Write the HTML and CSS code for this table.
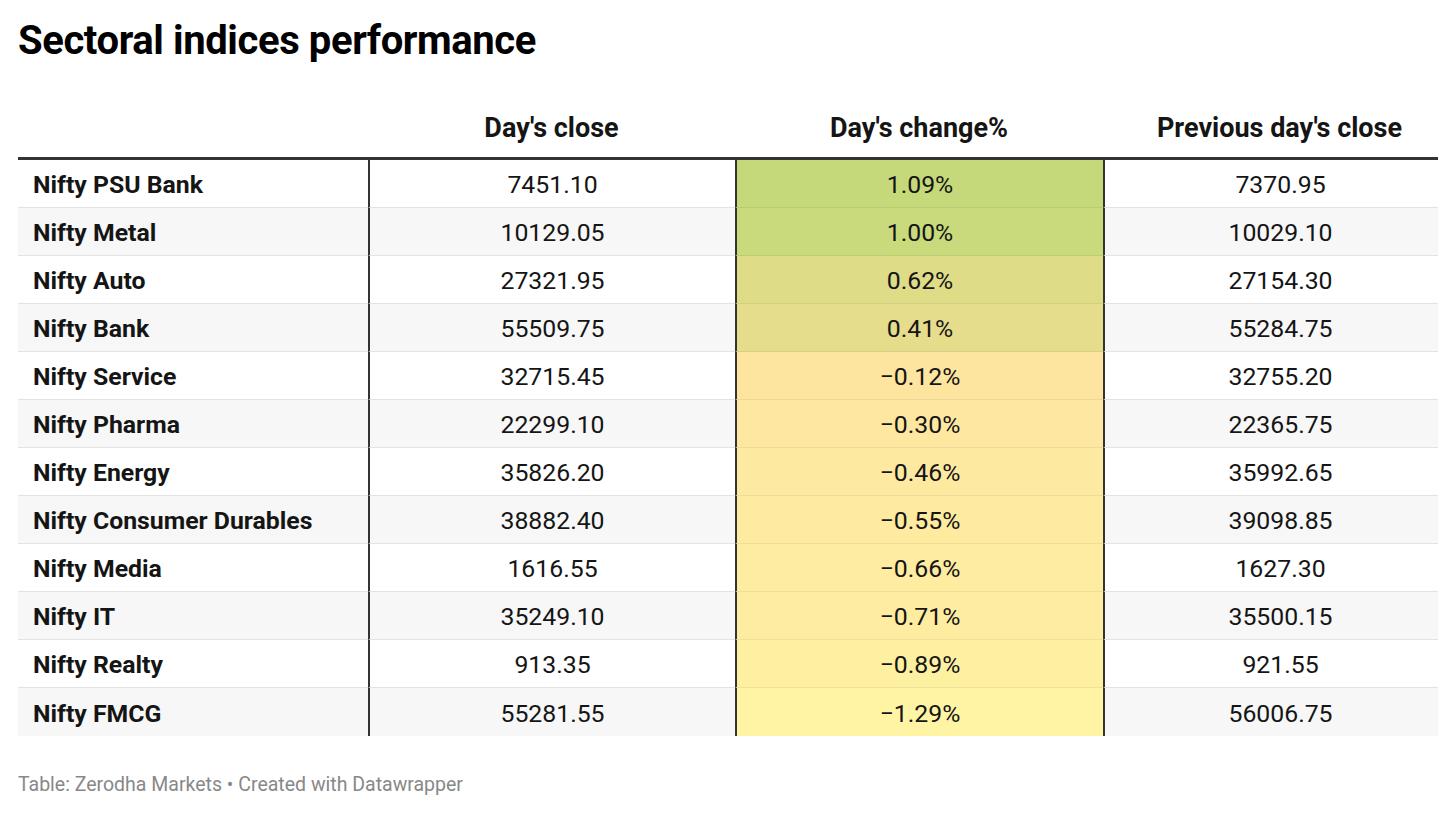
FILE: index.html
```html
<!DOCTYPE html>
<html>
<head>
<meta charset="utf-8">
<link rel="stylesheet" href="styles.css">
</head>
<body>
<div class="chart">
  <h1 class="title">Sectoral indices performance</h1>
  <table class="tbl">
    <colgroup>
      <col class="c-name"><col class="c-close"><col class="c-chg"><col class="c-prev">
    </colgroup>
    <thead>
      <tr>
        <th class="h-name"></th>
        <th>Day's close</th>
        <th>Day's change%</th>
        <th class="prev">Previous day's close</th>
      </tr>
    </thead>
    <tbody>
      <tr><td class="name">Nifty PSU Bank</td><td class="num sep">7451.10</td><td class="num sep chg" style="background:#c5d97a">1.09%</td><td class="num sep prev">7370.95</td></tr>
      <tr class="alt"><td class="name">Nifty Metal</td><td class="num sep">10129.05</td><td class="num sep chg" style="background:#c8da7b">1.00%</td><td class="num sep prev">10029.10</td></tr>
      <tr><td class="name">Nifty Auto</td><td class="num sep">27321.95</td><td class="num sep chg" style="background:#dfdc88">0.62%</td><td class="num sep prev">27154.30</td></tr>
      <tr class="alt"><td class="name">Nifty Bank</td><td class="num sep">55509.75</td><td class="num sep chg" style="background:#e5dc8c">0.41%</td><td class="num sep prev">55284.75</td></tr>
      <tr><td class="name">Nifty Service</td><td class="num sep">32715.45</td><td class="num sep chg" style="background:#fde49f">−0.12%</td><td class="num sep prev">32755.20</td></tr>
      <tr class="alt"><td class="name">Nifty Pharma</td><td class="num sep">22299.10</td><td class="num sep chg" style="background:#fee7a0">−0.30%</td><td class="num sep prev">22365.75</td></tr>
      <tr><td class="name">Nifty Energy</td><td class="num sep">35826.20</td><td class="num sep chg" style="background:#fee9a0">−0.46%</td><td class="num sep prev">35992.65</td></tr>
      <tr class="alt"><td class="name">Nifty Consumer Durables</td><td class="num sep">38882.40</td><td class="num sep chg" style="background:#feeba0">−0.55%</td><td class="num sep prev">39098.85</td></tr>
      <tr><td class="name">Nifty Media</td><td class="num sep">1616.55</td><td class="num sep chg" style="background:#feeca0">−0.66%</td><td class="num sep prev">1627.30</td></tr>
      <tr class="alt"><td class="name">Nifty IT</td><td class="num sep">35249.10</td><td class="num sep chg" style="background:#feeda1">−0.71%</td><td class="num sep prev">35500.15</td></tr>
      <tr><td class="name">Nifty Realty</td><td class="num sep">913.35</td><td class="num sep chg" style="background:#fef0a1">−0.89%</td><td class="num sep prev">921.55</td></tr>
      <tr class="alt last"><td class="name">Nifty FMCG</td><td class="num sep">55281.55</td><td class="num sep chg" style="background:#fff4a3">−1.29%</td><td class="num sep prev">56006.75</td></tr>
    </tbody>
  </table>
  <div class="footer">Table: Zerodha Markets • Created with Datawrapper</div>
</div>
</body>
</html>
```

FILE: styles.css
```css
html, body {
  margin: 0;
  padding: 0;
  background: #ffffff;
}
body {
  font-family: Roboto, "Liberation Sans", Arial, sans-serif;
  color: #151515;
}
.chart {
  padding: 0 18px;
}
.title {
  margin: 0;
  padding-top: 17px;
  font-size: 40px;
  line-height: 48px;
  font-weight: 700;
  color: #000;
  letter-spacing: -0.4px;
}
.tbl {
  margin-top: 38px;
  width: 1420px;
  border-collapse: separate;
  border-spacing: 0;
  table-layout: fixed;
}
.c-name { width: 350px; }
.c-close { width: 367px; }
.c-chg { width: 368px; }
.c-prev { width: 335px; }
.tbl th {
  height: 57px;
  box-sizing: border-box;
  padding: 0 0 14px 0;
  vertical-align: bottom;
  font-size: 27px;
  line-height: 30px;
  font-weight: 700;
  color: #151515;
  text-align: center;
  border-bottom: 3px solid #333333;
}
.tbl td {
  height: 48px;
  box-sizing: border-box;
  padding: 3px 0 0 0;
  font-size: 24.8px;
  line-height: 28px;
  border-bottom: 1px solid #e3e3e3;
  vertical-align: middle;
}
.tbl tr.last td {
  border-bottom: none;
}
.tbl tr.alt td {
  background: #f7f7f7;
}
.tbl td.name {
  font-weight: 700;
  padding-left: 15px;
  text-align: left;
  white-space: nowrap;
}
.tbl td.num {
  text-align: center;
  font-weight: 400;
}
.tbl td.sep {
  border-left: 2px solid #333333;
}
.tbl .prev {
  padding-left: 18px;
}
.tbl td.chg {
  border-bottom-color: rgba(0,0,0,0.06);
}
.footer {
  margin-top: 37px;
  font-size: 19.5px;
  line-height: 24px;
  color: #888888;
}
```
